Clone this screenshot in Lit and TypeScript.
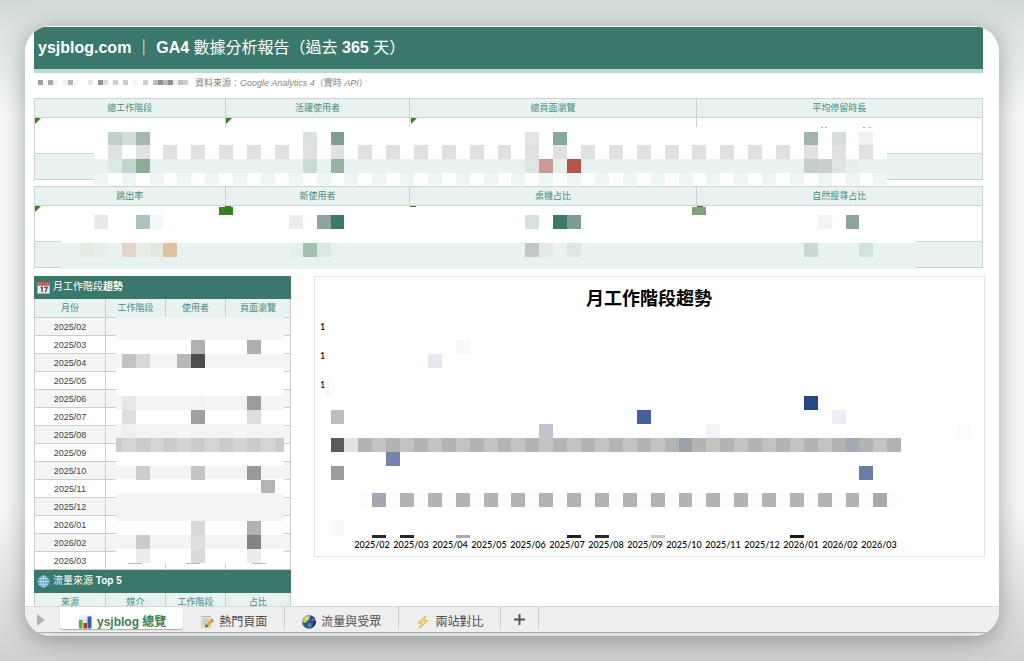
import { LitElement, html, svg, css } from "lit";
import { customElement, property, state } from "lit/decorators.js";

/* Redaction mosaic: a square lattice shared by every censored region. */
const PITCH = 13.92;
const colX = (c: number) => Math.round(10.36 + PITCH * c);
const rowY = (r: number) => Math.round(6.22 + PITCH * r);

type Cell = [row: number, col: number, fill: string];

const cell = ([r, c, fill]: Cell) =>
  svg`<rect x=${colX(c)} y=${rowY(r)} width=${colX(c + 1) - colX(c)} height=${rowY(r + 1) - rowY(r)} fill=${fill}></rect>`;
const box = (x: number, y: number, w: number, h: number, fill: string) =>
  svg`<rect x=${x} y=${y} width=${w} height=${h} fill=${fill}></rect>`;
const every = (row: number, from: number, to: number, step: number, fill: string): Cell[] => {
  const out: Cell[] = [];
  for (let c = from; c <= to; c += step) out.push([row, c, fill]);
  return out;
};

const kpiTop: Cell[] = [
  [9, 7, "#c2cecb"], [9, 8, "#d3dedb"], [9, 9, "#a6b8b6"], [9, 21, "#dbe2e0"], [9, 23, "#7f9d97"],
  [9, 37, "#e2e7e5"], [9, 39, "#87a8a1"], [9, 57, "#9fb3b0"], [9, 59, "#d9dedc"], [9, 61, "#edf2f1"],
  ...every(10, 7, 61, 2, "#e1e1e1"),
  [11, 7, "#dcebe7"], [11, 8, "#c0d6ca"], [11, 9, "#88ae96"], [11, 21, "#c8dad2"], [11, 23, "#98b3a1"],
  [11, 37, "#e2e4e1"], [11, 38, "#c79c95"], [11, 39, "#e6f0ec"], [11, 40, "#b9544a"],
  [11, 57, "#c6cecc"], [11, 58, "#c9cfcc"], [11, 59, "#dde6e3"], [11, 60, "#e7f0eb"],
];
const kpiBottom: Cell[] = [
  [15, 6, "#e7eae9"], [15, 9, "#acc4c1"], [15, 10, "#f2f7f8"], [15, 20, "#e9eceb"], [15, 22, "#8aa49e"],
  [15, 23, "#3b786c"], [15, 37, "#d7e0de"], [15, 39, "#3b786c"], [15, 40, "#7d9c94"], [15, 58, "#f3f5f4"],
  [15, 60, "#8aa49e"],
  [17, 5, "#e7ebe5"], [17, 6, "#e5f0ec"], [17, 8, "#e2d5c7"], [17, 9, "#e6eee6"], [17, 10, "#e4e8e1"],
  [17, 11, "#e1c09f"], [17, 20, "#e4f0ec"], [17, 21, "#a0c1b0"], [17, 22, "#dae9e4"], [17, 37, "#c1c9c6"],
  [17, 38, "#e2ebe9"], [17, 40, "#dee7e5"], [17, 57, "#c9d9d1"], [17, 61, "#d2e3db"],
];
const monthCells: Cell[] = [
  [24, 13, "#b0b0b0"], [24, 17, "#aeaeae"],
  [25, 8, "#c3c3c3"], [25, 9, "#d7d7d7"], [25, 12, "#b8b8b8"], [25, 13, "#4c4c4c"],
  [28, 8, "#e8e8e8"], [28, 13, "#f2f2f2"], [28, 17, "#9b9b9b"],
  [29, 8, "#dedede"], [29, 13, "#9f9f9f"], [29, 17, "#dedede"],
  [30, 8, "#f0f0f0"],
  ...every(31, 8, 18, 2, "#d4d4d4"), ...every(31, 9, 17, 2, "#cbcbcb"),
  [33, 9, "#cdcdcd"], [33, 13, "#c4c4c4"], [33, 17, "#9a9a9a"],
  [34, 18, "#b5b5b5"],
  [37, 13, "#d8d8d8"], [37, 17, "#b2b2b2"],
  [38, 9, "#cbcbcb"], [38, 13, "#dedede"], [38, 17, "#848484"],
  [39, 9, "#ececec"], [39, 13, "#dadada"], [39, 17, "#ededed"],
];
const chartCells: Cell[] = [
  [24, 32, "#f7f9fc"], [25, 30, "#e6e8ef"], [28, 57, "#264985"],
  [29, 23, "#bdbdbd"], [29, 45, "#456196"], [29, 59, "#ebeff5"],
  [30, 38, "#bfc4d0"], [30, 50, "#f2f4f9"], [30, 68, "#fdfdfd"],
  [31, 23, "#5b5b5b"], [31, 24, "#e2e2e2"],
  ...every(31, 25, 63, 2, "#b4b4b4"), ...every(31, 26, 62, 2, "#c3c3c3"),
  [31, 48, "#9ba1ab"], [31, 54, "#bfc1c7"], [31, 60, "#a3a9b6"],
  [32, 27, "#7385ae"], [33, 23, "#9d9d9d"], [33, 61, "#697ca5"],
  ...every(35, 25, 63, 1, "#fdfdfd"),
  [35, 26, "#a4a7b1"], ...every(35, 28, 60, 2, "#b4b4b4"), [35, 62, "#a6a8ae"],
  [37, 23, "#f9f9f9"],
];
const axisChips: [number, string][] = [
  [26, "#2a2a2a"], [28, "#2a2a2a"], [32, "#aaaaaa"], [40, "#222222"],
  [42, "#2a2a2a"], [46, "#c9c9c9"], [56, "#1a1a1a"],
];
const months = [
  "2025/02", "2025/03", "2025/04", "2025/05", "2025/06", "2025/07", "2025/08",
  "2025/09", "2025/10", "2025/11", "2025/12", "2026/01", "2026/02", "2026/03",
];

const icons: Record<string, unknown> = {
  calendar: html`<svg viewBox="0 0 28 28" aria-hidden="true">
    <rect x="1" y="4" width="26" height="23" fill="#e9e9e6" stroke="#b9bdb9"></rect>
    <rect x="1" y="1" width="26" height="9" fill="#a9524e"></rect>
    <path d="M5 3v5M9 3v5M13 3v5M19 3v5M23 3v5" stroke="#d79a92" stroke-width="1.5"></path>
    <path d="M8 15l3-2v11M15 13.500h7l-4 10.500" fill="none" stroke="#3c3c3c" stroke-width="2.600"></path>
  </svg>`,
  globe: html`<svg viewBox="0 0 28 28" aria-hidden="true">
    <circle cx="14" cy="14" r="12.500" fill="#5f9fca" stroke="#8cbfdc"></circle>
    <g fill="none" stroke="#d8ecf5" stroke-width="1.500">
      <ellipse cx="14" cy="14" rx="6" ry="12"></ellipse>
      <path d="M14 2v24M2 14h24M4 8h20M4 20h20"></path>
    </g>
  </svg>`,
  bars: html`<svg viewBox="0 0 28 28" aria-hidden="true">
    <rect x="1" y="1" width="26" height="26" fill="#eceff3"></rect>
    <path d="M1 8h26M1 14h26M1 20h26" stroke="#cfd6de"></path>
    <rect x="2" y="10" width="7" height="17" fill="#4fb53a"></rect>
    <rect x="11" y="16" width="7" height="11" fill="#c8301f"></rect>
    <rect x="19" y="3" width="8" height="24" fill="#2c63b8"></rect>
  </svg>`,
  memo: html`<svg viewBox="0 0 28 28" aria-hidden="true">
    <path d="M2 3h20v23H2z" fill="#e6e6e2" stroke="#c6c6c0"></path>
    <path d="M5 8h13M5 12h12M5 16h8M5 20h6" stroke="#a3a39d" stroke-width="1.500"></path>
    <path d="M2 3h20" stroke="#b6b6b0" stroke-width="2"></path>
    <path d="M10 25l2-7L22 8l5 5-10 10z" fill="#f0a92e"></path>
    <path d="M21 9l2-2 5 5-2 2z" fill="#d9677a"></path>
    <path d="M10 25l2-7 5 5z" fill="#6a5236"></path>
  </svg>`,
  earth: html`<svg viewBox="0 0 28 28" aria-hidden="true">
    <circle cx="14" cy="14" r="13.500" fill="#2a50b0"></circle>
    <path d="M17 1a13.500 13.500 0 0 1 8 21l-6 4c5-7 5-16-2-25z" fill="#1d2f7c"></path>
    <path d="M3 7C6 3 10 1 14 1l3 3-3 3 1 3-4 1-2 4-4 1-4-3c0-2 1-4 2-6z" fill="#b9cf44"></path>
    <path d="M12 16l6 1 1 4-4 5-3-3z" fill="#5c9a4a"></path>
    <path d="M7 5l5-2-2 5-4 2z" fill="#f2f4b8"></path>
    <path d="M20 6l4 2 1 5-4-2z" fill="#7aa04a"></path>
  </svg>`,
  bolt: html`<svg viewBox="0 0 28 28" aria-hidden="true">
    <path d="M19 2L4 16l8 0-5 10L24 11l-9 1z" fill="#fbe3a8" stroke="#f0a63a" stroke-width="2" stroke-linejoin="round"></path>
  </svg>`,
};

const CJK = css`"Liberation Sans", "Noto Sans CJK TC", sans-serif`;

@customElement("kpi-strip")
class KpiStrip extends LitElement {
  @property({ type: Array }) labels: string[] = [];
  @property() variant: "top" | "bottom" = "top";

  static styles = css`
    :host { display: block; position: relative; }
    table {
      width: 100%; table-layout: fixed; border-collapse: separate; border-spacing: 0;
      border: 1px solid #cfd1d1; border-right: 0; box-sizing: border-box;
      font-family: ${CJK}; font-size: 9px; line-height: 12px;
    }
    col.a { width: 20.1%; } col.b { width: 19.5%; } col.c { width: 30.2%; }
    th, td { box-sizing: border-box; padding: 0; border-right: 1px solid #cfd1d1; }
    th { height: 19px; background: #e8f2f1; color: #4a8c80; font-weight: 400; border-bottom: 1px solid #cfd1d1; }
    .value td { height: 36px; border-bottom: 1px solid #cfd1d1; }
    .delta td { height: 25px; background: #e8f2f1; }
    svg { position: absolute; inset: 0; width: 100%; height: 100%; }
  `;

  private mask() {
    if (this.variant === "top") {
      return html`<svg viewBox="34 98 949 82" preserveAspectRatio="none" overflow="visible" aria-hidden="true">
        ${box(94, 127, 793, 58, "#ffffff")}${box(94, 159, 793, 14, "#e8f2f1")}
        ${every(12, 6, 62, 2, "").map(([, c]) => box(colX(c), 173, 14, 12, "#eaf5f4"))}
        ${kpiTop.map(cell)}
        ${[35, 226, 411].map((x) => svg`<path d="M${x} 118h6l-6 6z" fill="#35801f"></path>`)}
        ${[821, 825, 863, 869].map((x) => box(x, 127, 2, 1, "#8fb3ac"))}
      </svg>`;
    }
    return html`<svg viewBox="34 186 949 82" preserveAspectRatio="none" overflow="visible" aria-hidden="true">
      ${box(61, 206, 855, 37, "#ffffff")}${box(61, 243, 855, 26, "#e8f2f1")}
      ${kpiBottom.map(cell)}
      <path d="M35 206h6l-6 6z" fill="#35801f"></path>
      ${box(219, 207, 14, 8, "#35801f")}${box(225, 206, 6, 1, "#35801f")}
      ${box(410, 206, 6, 1, "#35801f")}
      ${box(692, 207, 14, 8, "#7fa07c")}${box(697, 206, 6, 1, "#35801f")}
    </svg>`;
  }

  render() {
    return html`
      <table>
        <colgroup><col class="a" /><col class="b" /><col class="c" /><col class="c" /></colgroup>
        <thead><tr>${this.labels.map((l) => html`<th scope="col">${l}</th>`)}</tr></thead>
        <tbody>
          <tr class="value">${this.labels.map(() => html`<td></td>`)}</tr>
          <tr class="delta">${this.labels.map(() => html`<td></td>`)}</tr>
        </tbody>
      </table>
      ${this.mask()}
    `;
  }
}

@customElement("month-tables")
class MonthTables extends LitElement {
  static styles = css`
    :host { display: block; position: relative; }
    table {
      width: 100%; table-layout: fixed; border-collapse: separate; border-spacing: 0;
      font-family: ${CJK}; font-size: 9px; line-height: 12px; color: #3f3f3f;
    }
    col.first { width: 72px; } col.mid { width: 60px; }
    th, td {
      box-sizing: border-box; padding: 0; text-align: center;
      border-right: 1px solid #cbcdcd; border-bottom: 1px solid #cbcdcd;
    }
    tr > :first-child { border-left: 1px solid #cbcdcd; }
    td { height: 18px; }
    .labels th { height: 19px; background: #e8f2f1; color: #4a8c80; font-weight: 400; }
    .odd > * { background: #f4f4f4; }
    .month th { height: 18px; padding-top: 1px; font-weight: 400; }
    .title th { height: 23px; background: #3b786c; border-color: #3b786c; color: #ffffff; }
    .heading { display: flex; align-items: center; gap: 3px; padding-left: 2px; font-size: 10px; font-weight: 400; }
    .heading svg { width: 13px; height: 13px; }
    .mask { position: absolute; left: 0; top: 0; width: 100%; height: auto; }
  `;

  private title(icon: string, text: unknown) {
    return html`<tr class="title"><th colspan="4"><div class="heading">${icons[icon]}<span>${text}</span></div></th></tr>`;
  }

  render() {
    const bands: [number, number][] = [[317, 23], [354, 14], [396, 14], [424, 14], [466, 13], [493, 28], [535, 14]];
    return html`
      <table>
        <colgroup><col class="first" /><col class="mid" /><col class="mid" /><col /></colgroup>
        <tbody>
          ${this.title("calendar", html`月工作階段<b>趨勢</b>`)}
          <tr class="labels">${["月份", "工作階段", "使用者", "頁面瀏覽"].map((l) => html`<th scope="col">${l}</th>`)}</tr>
          ${months.map((m, i) => html`<tr class="month ${i % 2 ? "" : "odd"}"><th scope="row">${m}</th><td></td><td></td><td></td></tr>`)}
          ${this.title("globe", html`流量來源 <b>Top 5</b>`)}
          <tr class="labels">${["來源", "媒介", "工作階段", "占比"].map((l) => html`<th scope="col">${l}</th>`)}</tr>
        </tbody>
      </table>
      <svg class="mask" viewBox="34 276 257 336" aria-hidden="true">
        ${box(116, 317, 168, 246, "#ffffff")}
        ${bands.map(([y, h]) => box(116, y, 168, h, "#f4f4f4"))}
        ${box(116, 438, 6, 14, "#cbcbcb")}
        ${monthCells.map(cell)}
        ${box(275, 438, 9, 14, "#cbcbcb")}
        ${[128, 186, 252].map((x) => box(x, 563, 14, 1, "#b9bdbd"))}
      </svg>
    `;
  }
}

@customElement("trend-chart")
class TrendChart extends LitElement {
  static styles = css`
    :host { display: block; }
    svg { display: block; width: 100%; height: auto; }
    text { fill: #000000; font-family: Lato, "Noto Sans CJK TC", sans-serif; font-size: 9px; font-weight: 500; }
    .title { font-family: "Noto Sans CJK TC", sans-serif; font-size: 18px; font-weight: 700; }
    .month { text-anchor: middle; }
    .frame { fill: #ffffff; stroke: #e4e4e4; }
  `;

  render() {
    return html`<svg viewBox="314 276 671 282" role="img" aria-label="月工作階段趨勢">
      <rect class="frame" x="314.5" y="276.5" width="670" height="280"></rect>
      <text class="title month" x="649" y="305">月工作階段趨勢</text>
      ${[330, 359, 388].map((y) => svg`<text x="320" y=${y}>1</text>`)}
      ${box(325, 382, 5, 14, "#f7f7f7")}
      ${chartCells.map(cell)}
      ${axisChips.map(([c, fill]) => box(colX(c), 535, 14, 3, fill))}
      ${months.map((m, i) => svg`<text class="month" x=${372 + i * 39} y="548">${m}</text>`)}
    </svg>`;
  }
}

@customElement("sheet-tabs")
class SheetTabs extends LitElement {
  @state() private active = 0;

  static styles = css`
    :host { display: block; background: #efefef; border-top: 1px solid #d6d6d6; flex: none; }
    nav { display: flex; align-items: flex-start; height: 25px; padding-left: 9px; border-bottom: 1px solid #adadad; }
    .foot { height: 3px; background: #e2e2e2; }
    button {
      display: flex; align-items: center; justify-content: center; gap: 5px;
      box-sizing: border-box; height: 22px; margin: 0; padding: 8px 17px 0; border: 0;
      border-right: 1px solid #cccccc; background: none; color: #4c4c4c; overflow: hidden;
      font-family: ${CJK}; font-size: 12px; line-height: 14px; white-space: nowrap;
    }
    button svg { width: 14px; height: 14px; flex: none; }
    .scroll { width: 26px; padding: 4px 0 0; border: 0; }
    .scroll svg { width: 8px; height: 12px; margin-right: 12px; }
    .active {
      padding: 8px 17px 0 18px; border: 0; border-radius: 0 0 3px 3px; background: #ffffff;
      color: #3a8050; font-weight: 700; box-shadow: 0 1px 1px #a9a9a9;
    }
    .add { width: 38px; padding: 3px 0 0; }
    .add svg { width: 11px; height: 11px; }
  `;

  render() {
    const tabs = [
      ["bars", "ysjblog 總覽"], ["memo", "熱門頁面"], ["earth", "流量與受眾"], ["bolt", "兩站對比"],
    ];
    return html`
      <nav>
        <button class="scroll" aria-label="下一個工作表"><svg viewBox="0 0 8 12"><path d="M0 0l8 6-8 6z" fill="#b2b2b2"></path></svg></button>
        ${tabs.map(([icon, label], i) => html`
          <button class=${i === this.active ? "active" : ""} @click=${() => (this.active = i)}>${icons[icon]}<span>${label}</span></button>`)}
        <button class="add" aria-label="新增工作表"><svg viewBox="0 0 11 11"><path d="M5.500 0v11M0 5.500h11" stroke="#555555" stroke-width="2"></path></svg></button>
      </nav>
      <div class="foot"></div>
    `;
  }
}

@customElement("app-root")
class AppRoot extends LitElement {
  static styles = css`
    :host {
      display: block; box-sizing: border-box; height: 100vh; padding: 26px 25px 25px; overflow: hidden;
      background:
        linear-gradient(to bottom, rgba(200, 211, 208, .8), rgba(200, 211, 208, 0) 18%),
        linear-gradient(to top, rgba(204, 204, 204, .9), rgba(204, 204, 204, 0) 24%),
        #f7f8f8;
    }
    .window {
      display: flex; flex-direction: column; height: 100%; overflow: hidden;
      border-radius: 26px; background: #ffffff;
    }
    .shadow { height: 100%; border-radius: 26px; box-shadow: 0 5px 22px rgba(75, 90, 85, .5); }
    .sheet { flex: 1; min-height: 0; overflow: hidden; padding: 1px 14px 0 9px; }
    .wide { margin-right: 2px; }
    header { background: #3b786c; border-bottom: 4px solid #b9dad7; }
    h1 {
      margin: 0; padding: 0 4px; color: #ffffff; font-family: ${CJK};
      font-size: 16px; line-height: 42px; font-weight: 700; white-space: nowrap;
    }
    .light { font-weight: 400; }
    .source {
      display: flex; align-items: center; gap: 7px; height: 25px; margin: 0; padding: 0 4px 6px; box-sizing: border-box;
      color: #858585; font-family: ${CJK}; font-size: 9px; line-height: 12px; white-space: nowrap;
    }
    .source svg { width: 150px; height: 5px; flex: none; }
    .strips { display: grid; gap: 6px; }
    .board { display: grid; grid-template-columns: 257px minmax(0, 1fr); gap: 23px; padding-top: 8px; align-items: start; }
  `;

  render() {
    const chips: [number, string][] = [
      [0, "#a0a0a0"], [2, "#a8a8a8"], [3, "#f6f6f6"], [5, "#f0f0f0"], [6, "#b2b2b2"], [7, "#f6f6f6"], [10, "#e6e6e6"],
      [12, "#929292"], [13, "#dcdcdc"], [15, "#cfcfcf"], [17, "#cccccc"], [19, "#f4f4f4"], [21, "#cfcfcf"],
      [23, "#bdbdbd"], [24, "#8f8f8f"], [25, "#bbbbbb"], [26, "#8f8f8f"], [27, "#ededed"], [28, "#c0c0c0"], [29, "#cccccc"],
    ];
    return html`
      <div class="shadow"><div class="window">
        <main class="sheet">
          <header class="wide"><h1>ysjblog.com <span class="light">｜</span> GA4 <span class="light">數據分析報告（過去</span> 365 <span class="light">天）</span></h1></header>
          <p class="source">
            <svg viewBox="0 0 150 5" aria-hidden="true">${chips.map(([i, f]) => box(i * 5, 0, 5, 5, f))}</svg>
            <span>資料來源：<i>Google Analytics 4</i>（實時 <i>API</i>）</span>
          </p>
          <div class="strips wide">
            <kpi-strip variant="top" .labels=${["總工作階段", "活躍使用者", "總頁面瀏覽", "平均停留時長"]}></kpi-strip>
            <kpi-strip variant="bottom" .labels=${["跳出率", "新使用者", "桌機占比", "自然搜尋占比"]}></kpi-strip>
          </div>
          <div class="board">
            <month-tables></month-tables>
            <trend-chart></trend-chart>
          </div>
        </main>
        <sheet-tabs></sheet-tabs>
      </div></div>
    `;
  }
}
